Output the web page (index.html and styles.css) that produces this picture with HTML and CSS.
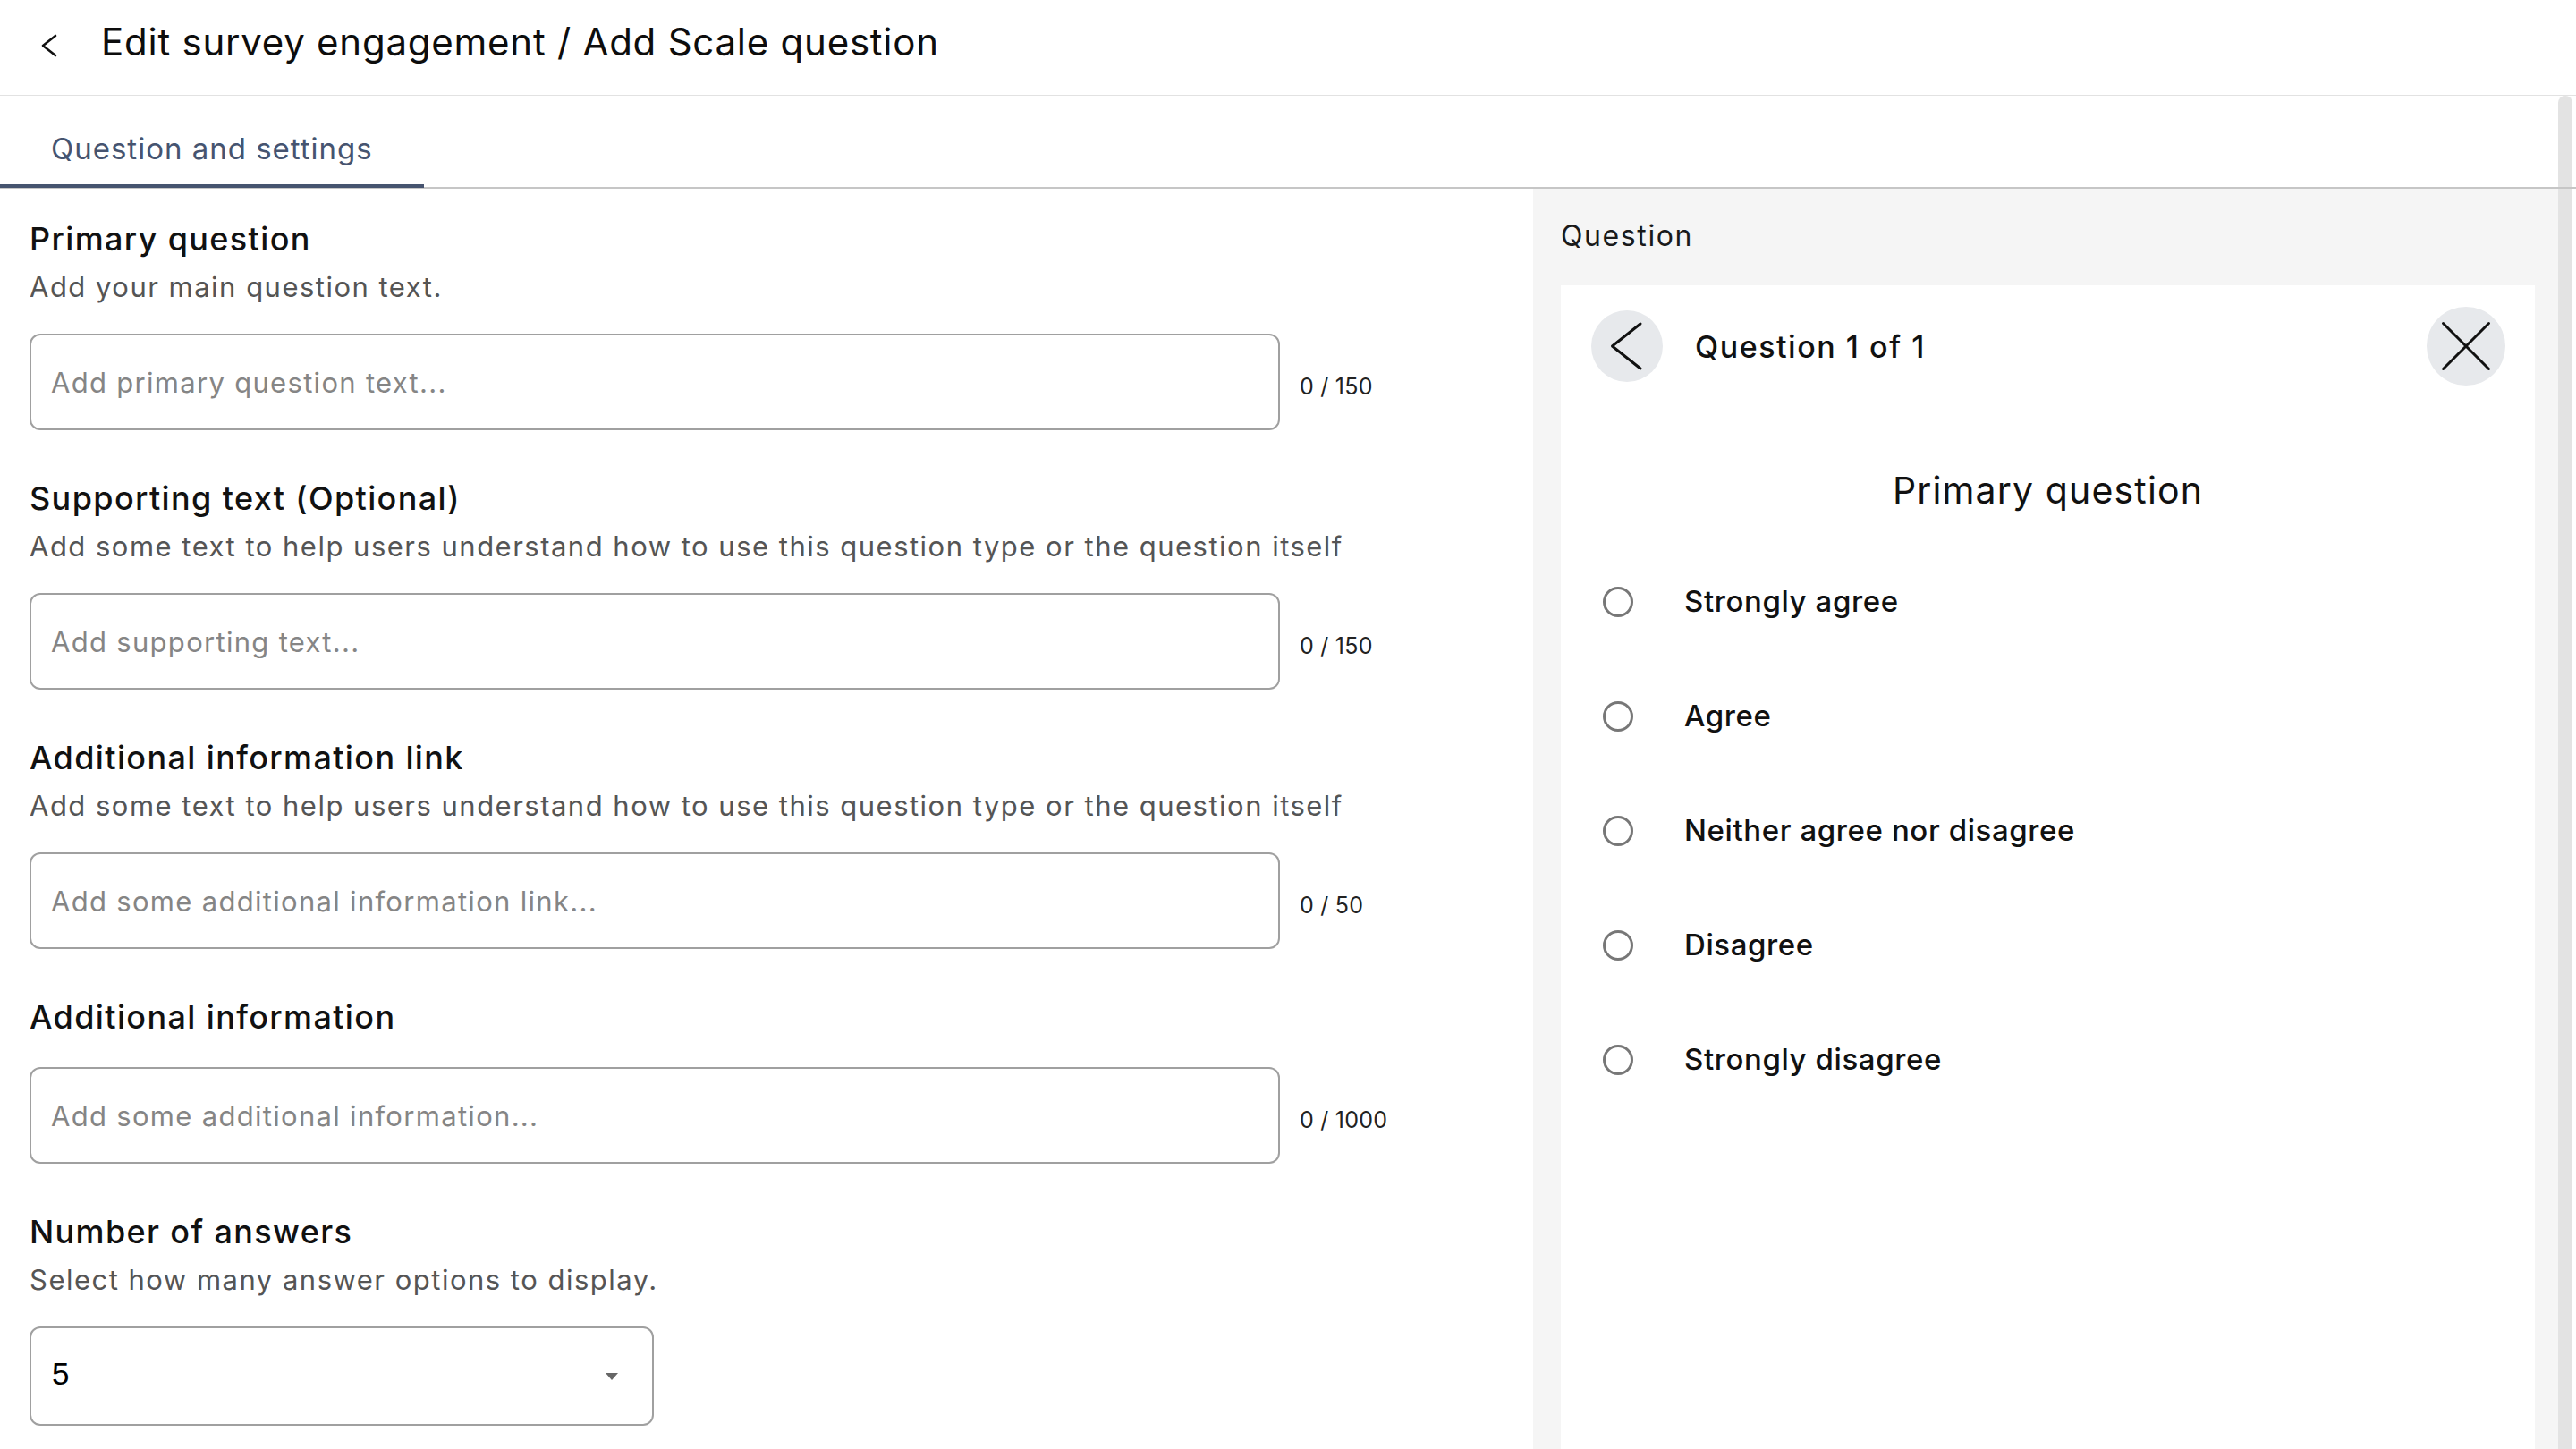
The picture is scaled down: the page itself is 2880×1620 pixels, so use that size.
FILE: index.html
```html
<!DOCTYPE html>
<html lang="en">
<head>
<meta charset="utf-8">
<title>Add Scale question</title>
<link rel="stylesheet" href="styles.css">
</head>
<body>
<div class="page">
  <header class="topbar">
    <svg class="topbar-back" width="28" height="28" viewBox="0 0 28 28" aria-hidden="true">
      <polyline points="21,3 7,14 21,25" fill="none" stroke="#111" stroke-width="2.6" stroke-linecap="round" stroke-linejoin="round"/>
    </svg>
    <h1 class="topbar-title">Edit survey engagement / Add Scale question</h1>
  </header>

  <nav class="tabs">
    <div class="tab tab-active">Question and settings</div>
  </nav>

  <div class="workspace">
    <section class="form">
      <div class="field">
        <div class="field-label">Primary question</div>
        <div class="field-desc">Add your main question text.</div>
        <div class="field-row">
          <input class="text-input" type="text" placeholder="Add primary question text...">
          <span class="counter">0 / 150</span>
        </div>
      </div>

      <div class="field">
        <div class="field-label">Supporting text (Optional)</div>
        <div class="field-desc">Add some text to help users understand how to use this question type or the question itself</div>
        <div class="field-row">
          <input class="text-input" type="text" placeholder="Add supporting text...">
          <span class="counter">0 / 150</span>
        </div>
      </div>

      <div class="field">
        <div class="field-label">Additional information link</div>
        <div class="field-desc">Add some text to help users understand how to use this question type or the question itself</div>
        <div class="field-row">
          <input class="text-input" type="text" placeholder="Add some additional information link...">
          <span class="counter">0 / 50</span>
        </div>
      </div>

      <div class="field">
        <div class="field-label">Additional information</div>
        <div class="field-row field-row-nodesc">
          <input class="text-input" type="text" placeholder="Add some additional information...">
          <span class="counter">0 / 1000</span>
        </div>
      </div>

      <div class="field">
        <div class="field-label">Number of answers</div>
        <div class="field-desc">Select how many answer options to display.</div>
        <div class="field-row">
          <div class="select">
            <span class="select-value">5</span>
            <svg class="select-arrow" width="16" height="8" viewBox="0 0 16 8" aria-hidden="true">
              <polygon points="1,0 15,0 8,8" fill="#666"/>
            </svg>
          </div>
        </div>
      </div>
    </section>

    <aside class="preview">
      <div class="preview-heading">Question</div>
      <div class="card">
        <div class="card-head">
          <div class="circle-btn circle-back">
            <svg width="80" height="80" viewBox="0 0 80 80" aria-hidden="true">
              <polyline points="55,15 23.5,40 55,65" fill="none" stroke="#111" stroke-width="3" stroke-linecap="round" stroke-linejoin="round"/>
            </svg>
          </div>
          <div class="card-count">Question 1 of 1</div>
          <div class="circle-btn circle-close">
            <svg width="88" height="88" viewBox="0 0 88 88" aria-hidden="true">
              <line x1="18.5" y1="18.5" x2="69.5" y2="69.5" stroke="#111" stroke-width="3" stroke-linecap="round"/>
              <line x1="69.5" y1="18.5" x2="18.5" y2="69.5" stroke="#111" stroke-width="3" stroke-linecap="round"/>
            </svg>
          </div>
        </div>
        <div class="card-question">Primary question</div>
        <ul class="options">
          <li class="option"><span class="radio"></span><span class="option-label">Strongly agree</span></li>
          <li class="option"><span class="radio"></span><span class="option-label">Agree</span></li>
          <li class="option"><span class="radio"></span><span class="option-label">Neither agree nor disagree</span></li>
          <li class="option"><span class="radio"></span><span class="option-label">Disagree</span></li>
          <li class="option"><span class="radio"></span><span class="option-label">Strongly disagree</span></li>
        </ul>
      </div>
    </aside>

    <div class="gutter"></div>
  </div>

  <div class="scroll-thumb"></div>
</div>
</body>
</html>
```

FILE: styles.css
```css
* {
  box-sizing: border-box;
}

html,
body {
  margin: 0;
  padding: 0;
  height: 100%;
  overflow: hidden;
  background: #ffffff;
}

body {
  font-family: "Inter", "Open Sans", "DejaVu Sans", sans-serif;
  letter-spacing: 0.03em;
  color: #111111;
}

.page {
  position: relative;
  width: 2880px;
  height: 1620px;
  display: flex;
  flex-direction: column;
}

/* ---------- top bar ---------- */
.topbar {
  height: 107px;
  flex: none;
  display: flex;
  align-items: flex-start;
  padding: 21px 0 0 41px;
  border-bottom: 1px solid #e2e2e2;
}

.topbar-back {
  margin-top: 16px;
  flex: none;
}

.topbar-title {
  margin: 0 0 0 44px;
  font-size: 42px;
  line-height: 52px;
  font-weight: 400;
  letter-spacing: 0.018em;
  color: #0d0d0d;
}

/* ---------- tabs ---------- */
.tabs {
  position: relative;
  z-index: 2;
  flex: none;
  display: flex;
  border-bottom: 2px solid #c6c6c6;
}

.tab {
  width: 474px;
  padding: 39px 0 20px 57px;
  font-size: 33px;
  line-height: 40px;
  letter-spacing: 0.03em;
  color: #465470;
  border-bottom: 4px solid transparent;
  margin-bottom: -1px;
}

.tab-active {
  border-bottom-color: #46546f;
}

/* ---------- workspace ---------- */
.workspace {
  flex: 1;
  min-height: 0;
  display: flex;
}

.form {
  width: 1714px;
  flex: none;
  padding: 30px 0 0 33px;
}

.field + .field {
  margin-top: 50px;
}

.field-label {
  font-size: 36px;
  line-height: 52px;
  font-weight: 500;
  letter-spacing: 0.038em;
  color: #111111;
}

.field-desc {
  margin-top: 2px;
  font-size: 31px;
  line-height: 52px;
  letter-spacing: 0.048em;
  color: #555555;
}

.field-row {
  margin-top: 26px;
  display: flex;
  align-items: center;
}

.field-row-nodesc {
  margin-top: 30px;
}

.text-input {
  width: 1398px;
  height: 108px;
  padding: 0 22px;
  border: 2px solid #a0a0a0;
  border-radius: 12px;
  font-family: inherit;
  font-size: 31px;
  letter-spacing: 0.042em;
  color: #111111;
  background: #ffffff;
  outline: none;
}

.text-input::placeholder {
  color: #858585;
}

.counter {
  margin-left: 22px;
  padding-top: 10px;
  font-size: 25px;
  color: #222222;
  letter-spacing: 0.01em;
}

.select {
  width: 698px;
  height: 111px;
  border: 2px solid #a0a0a0;
  border-radius: 12px;
  display: flex;
  align-items: center;
  justify-content: space-between;
  padding: 0 37px 0 23px;
}

.select-value {
  font-family: "Liberation Sans", Arial, sans-serif;
  font-size: 35px;
  letter-spacing: 0;
  color: #000000;
  margin-top: -6px;
}

.select-arrow {
  flex: none;
}

/* ---------- preview ---------- */
.preview {
  width: 1146px;
  flex: none;
  background: #f5f5f5;
  padding: 33px 26px 0 31px;
  display: flex;
  flex-direction: column;
}

.preview-heading {
  font-size: 32px;
  line-height: 40px;
  letter-spacing: 0.05em;
  color: #1a1a1a;
}

.card {
  flex: 1;
  margin-top: 35px;
  background: #ffffff;
}

.card-head {
  display: flex;
  align-items: center;
  height: 112px;
  padding: 24px 33px 0 34px;
}

.circle-btn {
  flex: none;
  border-radius: 50%;
  background: #e7e9ec;
  display: flex;
  align-items: center;
  justify-content: center;
}

.circle-back {
  width: 80px;
  height: 80px;
}

.circle-close {
  width: 88px;
  height: 88px;
  margin-left: auto;
}

.card-count {
  margin-left: 36px;
  font-size: 34px;
  font-weight: 500;
  letter-spacing: 0.045em;
  color: #111111;
}

.card-question {
  margin-top: 91px;
  text-align: center;
  font-size: 41px;
  line-height: 52px;
  letter-spacing: 0.028em;
  color: #111111;
}

.options {
  list-style: none;
  margin: 35px 0 0 0;
  padding: 0 0 0 47px;
}

.option {
  height: 128px;
  display: flex;
  align-items: center;
}

.radio {
  width: 34px;
  height: 34px;
  border: 3px solid #777777;
  border-radius: 50%;
  flex: none;
}

.option-label {
  margin-left: 57px;
  font-size: 33px;
  font-weight: 500;
  letter-spacing: 0.018em;
  color: #111111;
  margin-top: -3px;
}

.gutter {
  flex: 1;
}

.scroll-thumb {
  position: absolute;
  z-index: 1;
  right: 4px;
  top: 107px;
  bottom: 0;
  width: 16px;
  border-radius: 8px 8px 0 0;
  background: #e3e3e3;
}
```
